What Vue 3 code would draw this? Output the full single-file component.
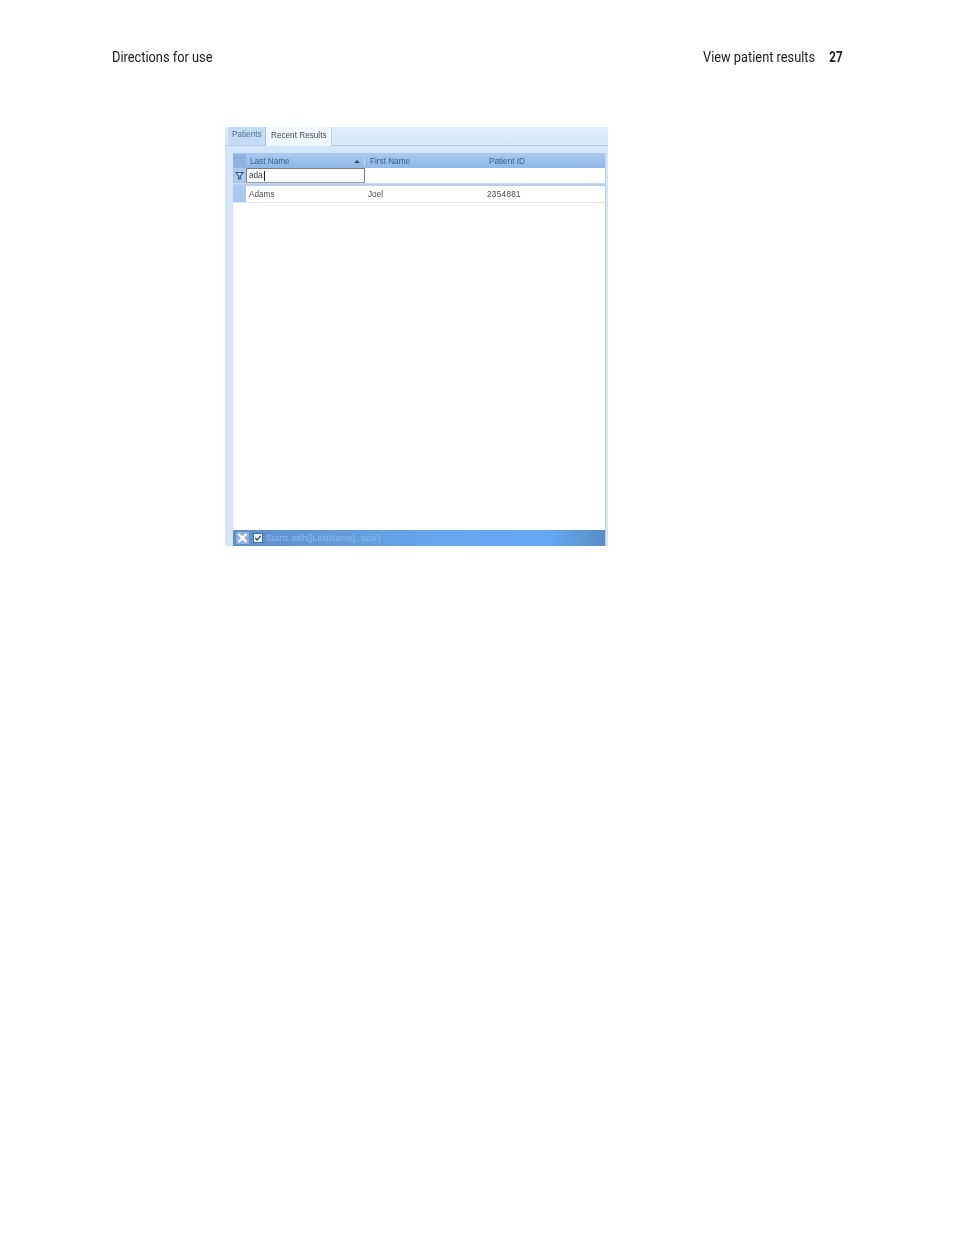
<template>
  <div class="page">
    <div class="page-head">
      <span>Directions for use</span>
      <span class="head-right">View patient results <b class="page-num">27</b></span>
    </div>

    <div class="shot">
      <div class="tabs">
        <div class="tab">Patients</div>
        <div class="tab active">Recent Results</div>
      </div>
      <div class="panel">
        <div class="grid">
          <div class="row head">
            <div class="gutter"></div>
            <div class="col col-last">
              <span>Last Name</span>
              <span class="sort"></span>
            </div>
            <div class="col col-first">First Name</div>
            <div class="col col-id">Patient ID</div>
          </div>
          <div class="row filter">
            <div class="gutter">
              <svg width="9" height="9" viewBox="0 0 9 9">
                <path d="M1 1.500h7L5.300 5v3H3.700V5z" fill="#d8e6f5" stroke="#33597f" stroke-width="1.200" />
              </svg>
            </div>
            <div class="edit">ada<i class="caret"></i></div>
          </div>
          <div class="row data" v-for="p in patients" :key="p.id">
            <div class="gutter plain"></div>
            <div class="col col-last">{{ p.last }}</div>
            <div class="col col-first">{{ p.first }}</div>
            <div class="col col-id">{{ p.id }}</div>
          </div>
          <div class="empty"></div>
          <div class="foot">
            <svg width="13" height="12" viewBox="0 0 13 12">
              <rect width="13" height="12" rx="1" fill="#8fb4dc" />
              <path d="M2.500 2l8 8M10.500 2l-8 8" stroke="#fff" stroke-width="2.400" />
            </svg>
            <svg width="10" height="10" viewBox="0 0 11 11">
              <rect x=".5" y=".5" width="10" height="10" fill="#eaf2fb" stroke="#3d689e" />
              <path d="M2.500 5.500l2 2.200 4-4.500" fill="none" stroke="#2a4d80" stroke-width="1.400" />
            </svg>
            <span class="foot-text">Starts with([LastName], 'ada')</span>
          </div>
        </div>
      </div>
    </div>
  </div>
</template>

<script setup>
const patients = [
  { last: 'Adams', first: 'Joel', id: '2354881' }
]
</script>

<style scoped>
.page {
  width: 954px;
  height: 1235px;
  box-sizing: border-box;
  padding-top: 49px;
  background: #fff;
  overflow: hidden;
}

.page-head {
  display: flex;
  justify-content: space-between;
  padding: 0 112px;
  font-family: "Roboto", "Liberation Sans", sans-serif;
  font-size: 14px;
  line-height: 16px;
  color: #1a1a1a;
}

.page-head span {
  display: block;
  transform: scaleX(0.915);
  transform-origin: left center;
  white-space: nowrap;
}

.head-right {
  width: 139px;
}

.page-num {
  display: inline-block;
  margin-left: 12px;
  font-weight: 700;
  transform: scaleX(0.9);
  transform-origin: left center;
}

.shot {
  width: 383px;
  height: 419px;
  margin: 62px 0 0 225px;
  display: flex;
  flex-direction: column;
  background: #dcebfb;
  font-family: "Liberation Sans", sans-serif;
  font-size: 8.2px;
  color: #4a5a6e;
  filter: blur(0.4px);
}

.tabs {
  display: flex;
  height: 18px;
  padding-left: 3px;
  border-bottom: 1px solid #b5cde4;
  background: linear-gradient(#e0eefc, #d5e7fa);
}

.tab {
  display: flex;
  align-items: center;
  width: 38px;
  padding: 0 0 3px 4px;
  box-sizing: border-box;
  height: 18px;
  color: #4d7096;
  background: #c6dcf4;
  border-right: 1px solid #a9c5e2;
}

.tab.active {
  width: 66px;
  padding-left: 5px;
  color: #3f4f60;
  background: #f0f6fd;
  border-right: 1px solid #c0d4e8;
  height: 19px;
}

.panel {
  flex: 1;
  display: flex;
  padding: 7px 2px 0 8px;
  background: #d3e5f9;
  min-height: 0;
}

.grid {
  flex: 1;
  display: flex;
  flex-direction: column;
  background: #fff;
  border-right: 1px solid #c3d1e2;
}

.row {
  display: flex;
  align-items: center;
  flex: none;
}

.gutter {
  width: 13px;
  align-self: stretch;
  display: flex;
  align-items: center;
  justify-content: center;
  flex: none;
}

.gutter.plain {
  background: #a9c9ee;
}

.col {
  padding-left: 4px;
  box-sizing: border-box;
}

.col-last {
  width: 119px;
}

.col-first {
  width: 119px;
}

.head {
  height: 15px;
  padding-top: 1px;
  box-sizing: border-box;
  background: linear-gradient(#a8caef, #8fb7e6);
  color: #3c5f88;
}

.head .gutter {
  background: #8eb4e2;
}

.head .col-last {
  display: flex;
  align-items: center;
  justify-content: space-between;
  padding-right: 4px;
  border-right: 1px solid #c3d8ef;
}

.head .col-first {
  padding-left: 5px;
}

.head .col-id {
  padding-left: 5px;
}

.sort {
  width: 0;
  height: 0;
  border-left: 3px solid transparent;
  border-right: 3px solid transparent;
  border-bottom: 3px solid #2f4e75;
}

.filter {
  height: 16px;
  background: #fff;
  border-bottom: 1px solid #c8d9ec;
  box-sizing: border-box;
}

.filter .gutter {
  background: #a9c9ee;
}

.edit {
  width: 119px;
  height: 15px;
  box-sizing: border-box;
  padding-left: 2px;
  line-height: 13px;
  color: #3a3a3a;
  background: #fff;
  border: 1px solid #7d7d7d;
  border-bottom-color: #9c9c9c;
}

.caret {
  display: inline-block;
  width: 1px;
  height: 10px;
  margin-left: 1px;
  vertical-align: middle;
  background: #222;
}

.data {
  height: 17px;
  margin-top: 2px;
  box-shadow: 0 -2px 0 #b9cdf0;
  border-bottom: 1px solid #e0e6ee;
  box-sizing: border-box;
  color: #4a4a4a;
}

.data .col-last,
.data .col-first,
.data .col-id {
  padding-left: 3px;
}

.data .col-id {
  letter-spacing: 0.3px;
}

.empty {
  flex: 1;
  min-height: 0;
  background: #fff;
}

.foot {
  height: 16px;
  display: flex;
  align-items: center;
  gap: 4px;
  padding-left: 3px;
  background: linear-gradient(90deg, #5f8fc8, #66a6ee 55%, #63a8f2 85%, #5a8dc4);
  flex: none;
}

.foot-text {
  margin-left: -1px;
  font-size: 8.8px;
  color: #8cbcf0;
  white-space: nowrap;
}
</style>
